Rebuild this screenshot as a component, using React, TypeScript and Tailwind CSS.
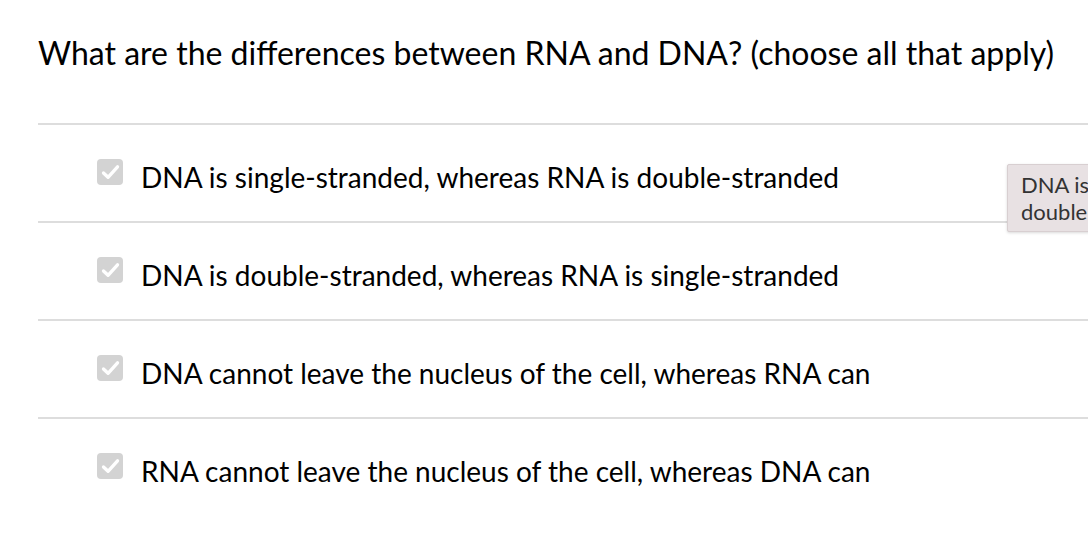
import React from 'react'

const options = [
  'DNA is single-stranded, whereas RNA is double-stranded',
  'DNA is double-stranded, whereas RNA is single-stranded',
  'DNA cannot leave the nucleus of the cell, whereas RNA can',
  'RNA cannot leave the nucleus of the cell, whereas DNA can',
]

function Check(){
  return (
    <span className="flex h-[26px] w-[26px] shrink-0 items-center justify-center rounded-[4px] bg-[#d3d3d3]">
      <svg width="21" height="21" viewBox="0 0 24 24" fill="none" stroke="#fff" strokeWidth="3.8" strokeLinecap="round" strokeLinejoin="round">
        <path d="M4 12.5l5.2 5L20 5.5" />
      </svg>
    </span>
  )
}

export default function App(){
  return (
    <div className="relative h-[548px] w-[1088px] overflow-hidden bg-white text-black" style={{ fontFamily: 'Lato, "Open Sans", sans-serif' }}>
      <h1 className="pl-[38px] pt-[32px] text-[32px] leading-[42px]">What are the differences between RNA and DNA? (choose all that apply)</h1>
      <div className="mt-[49px] ml-[38px]">
        {options.map((o, i) => (
          <div key={i} className="flex h-[98px] items-center gap-[18px] border-t-2 border-[#dddddd] pl-[59px] pb-[2px]">
            <Check />
            <span className="pt-[9px] text-[28px] leading-[34px]">{o}</span>
          </div>
        ))}
      </div>
      <div className="absolute left-[1007px] top-[164px] w-[200px] whitespace-nowrap rounded-[2px] border border-[#d8cfd1] bg-[#e8e1e3] px-[13px] py-[6px] text-[22px] leading-[27px] text-[#333] shadow-[0_1px_3px_rgba(0,0,0,0.15)]">
        DNA is<br />double-stranded
      </div>
    </div>
  )
}
